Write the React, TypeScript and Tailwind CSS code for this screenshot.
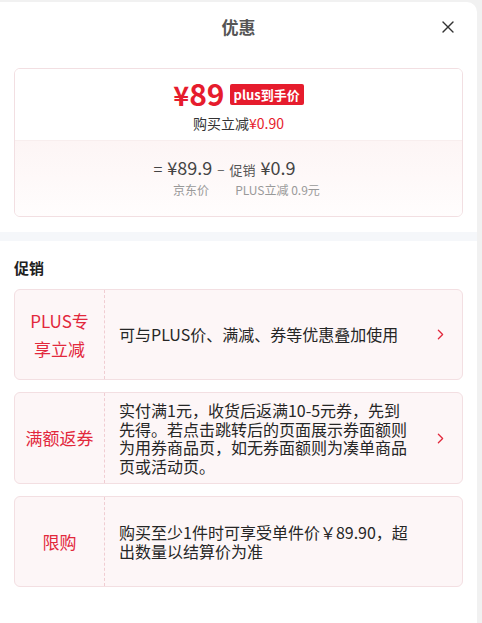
import { ChevronRight, X } from "lucide-react";

const promos = [
	{
		tag: "PLUS专享立减",
		text: "可与PLUS价、满减、券等优惠叠加使用",
		arrow: true,
	},
	{
		tag: "满额返券",
		text: "实付满1元，收货后返满10-5元券，先到先得。若点击跳转后的页面展示券面额则为用券商品页，如无券面额则为凑单商品页或活动页。",
		arrow: true,
	},
	{
		tag: "限购",
		text: "购买至少1件时可享受单件价￥89.90，超出数量以结算价为准",
		arrow: false,
	},
];

function PromoCard({ tag, text, arrow }: { tag: string; text: string; arrow: boolean }) {
	return (
		<div className="flex min-h-[91px] items-stretch rounded-[6px] border border-[#f3dfe2] bg-[#fdf6f7]">
			<div className="flex w-[90px] shrink-0 items-center justify-center border-r border-dashed border-[#f0cdd2] px-[10px] text-center text-[17px] leading-[28px] text-[#e2283c]">
				{tag}
			</div>
			<div className="flex flex-1 items-center py-[8px] pl-[14px]">
				<p className="w-[294px] text-[16px] leading-[18.5px] text-[#262626]">{text}</p>
			</div>
			<div className="flex w-[40px] shrink-0 items-center justify-center pl-[2px] pr-[6px]">
				{arrow && <ChevronRight size={17} strokeWidth={1.8} className="text-[#e2283c]" />}
			</div>
		</div>
	);
}

export default function App() {
	return (
		<div className="h-[623px] w-[482px] overflow-hidden bg-[#f1f1f1] pt-[2px] font-['Noto_Sans_CJK_SC','Noto_Sans',sans-serif]">
			<div className="h-full w-[477px] rounded-tr-[10px] bg-white">
				{/* Header */}
				<div className="relative flex h-[50px] items-center justify-center">
					<span className="text-[17px] font-bold text-[#555]">优惠</span>
					<X size={20} strokeWidth={1.6} className="absolute right-[19px] top-[15px] text-[#333]" />
				</div>

				{/* Price card */}
				<div className="px-[14px] pt-[16px] pb-[15px]">
					<div className="overflow-hidden rounded-[6px] border border-[#f2dfe2]">
						<div className="flex h-[71px] flex-col items-center bg-white pt-[7px]">
							<div className="flex items-center gap-[5px]">
								<span className="text-[30px] font-bold leading-[34px] text-[#e61c2d]">
									<span className="text-[27px]">¥</span>89
								</span>
								<span className="rounded-[2px] bg-[#e61c2d] px-[4px] text-[13px] font-bold leading-[21px] text-white">
									plus到手价
								</span>
							</div>
							<div className="mt-[1px] text-[14px] leading-[20px] text-[#333]">
								购买立减<span className="text-[#e61c2d]">¥0.90</span>
							</div>
						</div>
						<div className="flex h-[76px] flex-col items-center border-t border-[#f8eeee] bg-gradient-to-b from-[#fdf5f5] to-[#fffdfd] pt-[15px]">
							<div className="mr-[28px] flex items-baseline gap-[5px] text-[#444]">
								<span className="text-[16px]">=</span>
								<span className="text-[18px] leading-[22px]">¥89.9</span>
								<span className="text-[13px] text-[#666]">−</span>
								<span className="text-[13px] text-[#555]">促销</span>
								<span className="text-[18px] leading-[22px]">¥0.9</span>
							</div>
							<div className="mt-[2px] flex gap-[26px] pl-[16px] text-[12px] leading-[16px] text-[#999]">
								<span>京东价</span>
								<span>PLUS立减 0.9元</span>
							</div>
						</div>
					</div>
				</div>

				<div className="h-[9px] bg-[#f5f7fa]" />

				{/* Promotions */}
				<div className="px-[14px] pt-[17px]">
					<h2 className="text-[15px] font-bold leading-[20px] text-[#222]">促销</h2>
					<div className="mt-[11px] flex flex-col gap-[12px]">
						{promos.map((p, i) => (
							<PromoCard key={i} {...p} />
						))}
					</div>
				</div>
			</div>
		</div>
	);
}
